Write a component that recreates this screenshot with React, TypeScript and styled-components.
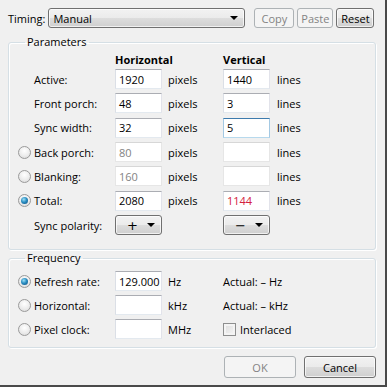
import styled, { createGlobalStyle, css } from "styled-components"

const GlobalStyle = createGlobalStyle`
  html, body {
    margin: 0;
    padding: 0;
    background: #f0f0f0;
  }
  body {
    font-family: "Open Sans", "Liberation Sans", Arial, sans-serif;
    font-size: 11px;
    color: #000;
  }
`

const Window = styled.div`
  box-sizing: border-box;
  width: 387px;
  height: 387px;
  background: #f0f0f0;
  border-right: 2px solid #4a4a4a;
  border-bottom: 2px solid #4a4a4a;
  padding: 8px 0 0 8px;
  display: flex;
  flex-direction: column;
`

const TopRow = styled.div`
  display: flex;
  align-items: center;
  height: 20px;
`

const Label = styled.span<{ $disabled?: boolean }>`
  white-space: nowrap;
  color: ${p => (p.$disabled ? "#838383" : "#000")};
`

const winGradient = css`
  background: linear-gradient(#f2f2f2 0%, #ebebeb 50%, #dddddd 50%, #cfcfcf 100%);
  box-shadow: inset 0 0 0 1px rgba(255, 255, 255, 0.7);
`

const Combo = styled.div<{ $width: number; $center?: boolean }>`
  box-sizing: border-box;
  width: ${p => p.$width}px;
  height: 20px;
  border: 1px solid #707070;
  border-radius: 3px;
  ${winGradient};
  display: flex;
  align-items: center;
  padding: 0 6px 0 ${p => (p.$center ? 11 : 4)}px;
  justify-content: space-between;
`

const Sign = styled.span`
  font-family: "DejaVu Sans", sans-serif;
  font-size: 13px;
  line-height: 1;
`

const Arrow = styled.span`
  width: 0;
  height: 0;
  border-left: 4px solid transparent;
  border-right: 4px solid transparent;
  border-top: 4px solid #000;
`

const Button = styled.button<{ $width: number; $disabled?: boolean; $height?: number }>`
  box-sizing: border-box;
  width: ${p => p.$width}px;
  height: ${p => p.$height ?? 20}px;
  padding: 0;
  font: inherit;
  border-radius: 3px;
  ${p =>
    p.$disabled
      ? css`
          border: 1px solid #adb2b5;
          background: #f4f4f4;
          color: #838383;
        `
      : css`
          border: 1px solid #707070;
          color: #000;
          ${winGradient};
        `}
`

const TopButtons = styled.div`
  display: flex;
  gap: 3px;
  margin-left: 9px;
`

const Group = styled.fieldset<{ $top: number; $padTop: number; $padBottom: number }>`
  box-sizing: border-box;
  width: 368px;
  margin: ${p => p.$top}px 0 0 0;
  padding: ${p => p.$padTop}px 0 ${p => p.$padBottom}px 9px;
  border: 1px solid #d5dfe5;
  border-radius: 3px;
  box-shadow: inset 1px 1px 0 #fff, 1px 1px 0 #fff;
  min-width: 0;
`

const Legend = styled.legend`
  padding: 0 2px;
  margin-left: 7px;
  line-height: 14px;
`

const ParamGrid = styled.div`
  display: grid;
  grid-template-columns: 97px 47px 61px 47px auto;
  grid-template-rows: 16px repeat(7, 24.33px);
  align-items: center;
`

const FreqGrid = styled.div`
  display: grid;
  grid-template-columns: 97px 47px 61px auto;
  grid-auto-rows: 24px;
  align-items: center;
`

const ColHeader = styled.span`
  font-weight: bold;
`

const RowLabel = styled.div`
  display: flex;
  align-items: center;
`

const RadioSlot = styled.span`
  width: 16px;
  height: 13px;
  flex: none;
  display: flex;
  align-items: center;
`

const Radio = styled.span<{ $checked?: boolean }>`
  box-sizing: border-box;
  width: 13px;
  height: 13px;
  border-radius: 50%;
  border: 1px solid #9a9a9a;
  background: radial-gradient(circle at 50% 35%, #ffffff 0%, #ececec 55%, #d6d6d6 100%);
  display: flex;
  align-items: center;
  justify-content: center;
  &::after {
    content: "";
    display: ${p => (p.$checked ? "block" : "none")};
    width: 7px;
    height: 7px;
    border-radius: 50%;
    background: radial-gradient(circle at 40% 35%, #9ee0f6 0%, #2a8ec2 45%, #0b4a7c 100%);
  }
`

const Check = styled.span`
  box-sizing: border-box;
  width: 13px;
  height: 13px;
  border: 1px solid #8e8f8f;
  background: linear-gradient(135deg, #dcdcdc, #f7f7f7);
  box-shadow: inset 0 0 0 2px #f4f4f4;
  margin-right: 4px;
  flex: none;
`

const Input = styled.div<{ $disabled?: boolean; $focused?: boolean; $red?: boolean }>`
  box-sizing: border-box;
  width: 47px;
  height: 20px;
  background: #fff;
  border: 1px solid;
  border-color: ${p =>
    p.$focused
      ? "#3d7bad #a4c9e3 #b7d9ed #a4c9e3"
      : p.$disabled
      ? "#d7d7d7 #e6e6e6 #e6e6e6 #e6e6e6"
      : "#abadb3 #e2e3ea #e3e9ef #dbdfe6"};
  padding-left: 3px;
  display: flex;
  align-items: center;
  white-space: nowrap;
  color: ${p => (p.$red ? "#d4213d" : p.$disabled ? "#838383" : "#000")};
`

const Unit = styled.span<{ $pad?: number }>`
  padding-left: ${p => p.$pad ?? 6}px;
`

const InlineRow = styled.div`
  display: flex;
  align-items: center;
`

const BottomRow = styled.div`
  display: flex;
  justify-content: flex-end;
  gap: 8px;
  width: 368px;
  margin-top: 8px;
`

type Row = {
  label: string
  radio?: boolean
  checked?: boolean
  h: string
  hDisabled?: boolean
  v: string
  vDisabled?: boolean
  vFocused?: boolean
  vRed?: boolean
}

const rows: Row[] = [
  { label: "Active:", h: "1920", v: "1440" },
  { label: "Front porch:", h: "48", v: "3" },
  { label: "Sync width:", h: "32", v: "5", vFocused: true },
  { label: "Back porch:", radio: true, h: "80", hDisabled: true, v: "", vDisabled: true },
  { label: "Blanking:", radio: true, h: "160", hDisabled: true, v: "", vDisabled: true },
  { label: "Total:", radio: true, checked: true, h: "2080", v: "1144", vRed: true },
]

const freqRows = [
  { label: "Refresh rate:", checked: true, value: "129.000", unit: "Hz", actual: "Actual: \u2013 Hz" },
  { label: "Horizontal:", value: "", unit: "kHz", actual: "Actual: \u2013 kHz" },
  { label: "Pixel clock:", value: "", unit: "MHz", actual: "" },
]

export default function App() {
  return (
    <Window>
      <GlobalStyle />
      <TopRow>
        <Label>Timing:</Label>
        <Combo $width={197} style={{ marginLeft: 3 }}>
          <span>Manual</span>
          <Arrow />
        </Combo>
        <TopButtons>
          <Button $width={40} $disabled>Copy</Button>
          <Button $width={36} $disabled>Paste</Button>
          <Button $width={38}>Reset</Button>
        </TopButtons>
      </TopRow>

      <Group $top={7} $padTop={2} $padBottom={12}>
        <Legend>Parameters</Legend>
        <ParamGrid>
          <span />
          <ColHeader>Horizontal</ColHeader>
          <span />
          <ColHeader>Vertical</ColHeader>
          <span />
          {rows.map(r => (
            <>
              <RowLabel key={r.label}>
                <RadioSlot>{r.radio && <Radio $checked={r.checked} />}</RadioSlot>
                <Label>{r.label}</Label>
              </RowLabel>
              <Input $disabled={r.hDisabled}>{r.h}</Input>
              <Unit>pixels</Unit>
              <Input $disabled={r.vDisabled} $focused={r.vFocused} $red={r.vRed}>
                {r.v}
              </Input>
              <Unit $pad={7}>lines</Unit>
            </>
          ))}
          <RowLabel>
            <RadioSlot />
            <Label>Sync polarity:</Label>
          </RowLabel>
          <Combo $width={47} $center>
            <Sign>+</Sign>
            <Arrow />
          </Combo>
          <span />
          <Combo $width={47} $center>
            <Sign>&minus;</Sign>
            <Arrow />
          </Combo>
          <span />
        </ParamGrid>
      </Group>

      <Group $top={1} $padTop={4} $padBottom={6}>
        <Legend>Frequency</Legend>
        <FreqGrid>
          {freqRows.map(f => (
            <>
              <RowLabel key={f.label}>
                <RadioSlot>
                  <Radio $checked={f.checked} />
                </RadioSlot>
                <Label>{f.label}</Label>
              </RowLabel>
              <Input>{f.value}</Input>
              <Unit>{f.unit}</Unit>
              {f.actual ? (
                <Label>{f.actual}</Label>
              ) : (
                <InlineRow>
                  <Check />
                  <Label>Interlaced</Label>
                </InlineRow>
              )}
            </>
          ))}
        </FreqGrid>
      </Group>

      <BottomRow>
        <Button $width={72} $height={22} $disabled>OK</Button>
        <Button $width={72} $height={22}>Cancel</Button>
      </BottomRow>
    </Window>
  )
}
